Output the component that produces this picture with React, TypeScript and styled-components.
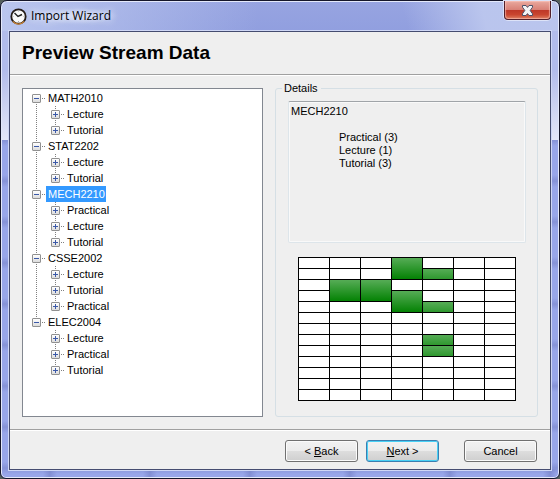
import React, { useState } from "react";
import styled, { createGlobalStyle, css } from "styled-components";

const GlobalStyle = createGlobalStyle`
  * { box-sizing: border-box; }
  html, body { margin: 0; padding: 0; background: #55605c; }
  body {
    font-family: "Liberation Sans", Arial, sans-serif;
    font-size: 11px;
    line-height: 16px;
    color: #000;
    cursor: default;
  }
`;

const Frame = styled.div`
  display: flex;
  flex-direction: column;
  min-height: 100vh;
  padding: 0 8px 8px;
  border: 1px solid #15162a;
  border-radius: 7px 7px 6px 6px;
  box-shadow: inset 0 0 0 1px #e4e9fb;
  background:
    linear-gradient(to right, rgba(190, 202, 240, 0.9), rgba(150, 164, 226, 0) 46%) 0 0 / 100% 30px no-repeat,
    linear-gradient(75deg, rgba(190, 200, 238, 0) 72%, rgba(188, 199, 238, 0.95) 86%) 0 0 / 100% 30px no-repeat,
    linear-gradient(#97a4e1, #919fdf) 0 0 / 100% 30px no-repeat,
    linear-gradient(rgba(178, 188, 235, 1) 50%, #e4e7f8) 0 0 / 100% 139px no-repeat,
    repeating-linear-gradient(to right, transparent 0 42px, rgba(100, 110, 180, 0.4) 49px, transparent 56px 100px) 0 100% / 100% 9px no-repeat,
    repeating-linear-gradient(to bottom, transparent 0 10px, rgba(100, 110, 180, 0.35) 16px, transparent 22px 41px) 0 0,
    #98a6e9;
`;

const TitleBar = styled.header`
  display: flex;
  align-items: flex-start;
  height: 30px;
  padding-left: 1px;
`;

const TitleText = styled.div`
  flex: 1;
  display: flex;
  align-items: center;
  gap: 4px;
  height: 28px;
  padding-top: 2px;
  font-family: "Open Sans", "Noto Sans", sans-serif;
  font-size: 12px;

  span {
    padding-right: 8px;
    background: radial-gradient(closest-side, rgba(235, 240, 253, 0.6), rgba(235, 240, 253, 0));
    text-shadow: 0 0 6px #e8edfc, 0 0 10px #e8edfc;
  }
`;

const CloseButton = styled.button`
  display: flex;
  align-items: center;
  justify-content: center;
  width: 47px;
  height: 19px;
  padding: 0;
  border: 1px solid #53202a;
  border-top: 0;
  border-radius: 0 0 4px 4px;
  box-shadow: 0 0 0 1px #dde3f8, inset 0 0 1px 1px rgba(255, 205, 195, 0.6);
  background: linear-gradient(#e9a99f, #d98177 48%, #bd3727 50%, #c9452f 75%, #dc7b5c);
`;

const Content = styled.main`
  flex: 1;
  display: flex;
  flex-direction: column;
  border: 1px solid #454c70;
  box-shadow: 0 0 0 1px #cfd7f6;
  background: #efefef;
`;

const Heading = styled.h1`
  margin: 0;
  padding: 9px 12px;
  border-bottom: 1px solid #a0a0a0;
  box-shadow: 0 1px 0 #fff;
  font-size: 19px;
  font-weight: bold;
  line-height: 24px;
`;

const Panels = styled.div`
  flex: 1;
  display: grid;
  grid-template-columns: 241fr 263fr;
  gap: 12px;
  padding: 13px 12px 12px;
`;

const TreePane = styled.div`
  padding: 1px 9px;
  border: 1px solid #828790;
  background: #fff;
`;

const dotsDown = "repeating-linear-gradient(to bottom, #808080 0 1px, transparent 1px 2px)";
const dotsAcross = "repeating-linear-gradient(to right, #808080 0 1px, transparent 1px 2px)";

const TreeList = styled.ul`
  margin: 0;
  padding: 0;
  list-style: none;
`;

const Branch = styled.li`
  background: ${dotsDown} 4px 0 / 1px 100% no-repeat;

  &:first-child { background-position: 4px 8px; }
  &:last-child { background-size: 1px 8px; }
`;

const ChildList = styled(TreeList)`
  padding-left: 19px;
`;

const Leaf = styled.li`
  background: ${dotsDown} 4px 0 / 1px 100% no-repeat;

  &:last-child { background-size: 1px 8px; }
`;

const NodeRow = styled.div`
  display: flex;
  align-items: center;
  height: 16px;
  background: ${dotsAcross} 10px 8px / 4px 1px no-repeat;
`;

const Expander = styled.button`
  width: 9px;
  height: 9px;
  margin-right: 5px;
  padding: 0;
  border: 1px solid #919191;
  border-radius: 1px;
  background: linear-gradient(#fff, #dcdcdc);

  svg { display: block; }
`;

const NodeLabel = styled.span<{ $selected?: boolean }>`
  padding: 0 1px 0 2px;
  ${(p) => p.$selected && css`
    background: #3399ff;
    color: #fff;
  `}
`;

const GroupBox = styled.fieldset`
  min-width: 0;
  margin: -8px 0 0;
  padding: 5px 11px 15px 12px;
  border: 1px solid #d5dfe5;
  border-radius: 3px;

  legend {
    margin-left: -6px;
    padding: 0 3px 0 2px;
    line-height: 16px;
  }
`;

const Summary = styled.div`
  min-height: 142px;
  padding: 3px 2px;
  border: 1px solid #dde5ea;
  border-top: 1px solid #a0a4a8;
  border-radius: 2px;
  box-shadow: inset 0 0 0 1px #f9f9f9;
  line-height: 13px;

  p { margin: 0 0 13px; }
  ul { margin: 0; padding: 0 0 0 48px; list-style: none; }
`;

const Timetable = styled.table`
  width: calc(100% - 20px);
  margin: 14px 10px 0;
  table-layout: fixed;
  border-collapse: collapse;
  background: #fff;
`;

const Slot = styled.td<{ $busy?: boolean }>`
  height: 11px;
  padding: 0;
  border: 1px solid #000;
  font-size: 0;
  line-height: 0;
  ${(p) => p.$busy && css`
    background: linear-gradient(#56ac56, #008000) 0 0 / 100% 22px no-repeat;
  `}
`;

const Footer = styled.footer`
  display: flex;
  justify-content: flex-end;
  gap: 8px;
  padding: 10px 13px 7px;
  border-top: 1px solid #a0a0a0;
  box-shadow: inset 0 1px 0 #fff;
`;

const PushButton = styled.button<{ $primary?: boolean; $apart?: boolean }>`
  width: 73px;
  height: 22px;
  margin-left: ${(p) => (p.$apart ? "17px" : "0")};
  padding: 0;
  border: 1px solid ${(p) => (p.$primary ? "#3c7fb1" : "#707070")};
  border-radius: 3px;
  box-shadow: inset 0 0 0 1px ${(p) => (p.$primary ? "#48d0f5" : "#fbfbfb")};
  background: linear-gradient(#f2f2f2, #ebebeb 50%, #dddddd 51%, #cfcfcf);
  color: #000;
  font: inherit;
  line-height: 18px;
`;

type Course = { code: string; streams: string[] };

const courses: Course[] = [
  { code: "MATH2010", streams: ["Lecture", "Tutorial"] },
  { code: "STAT2202", streams: ["Lecture", "Tutorial"] },
  { code: "MECH2210", streams: ["Practical", "Lecture", "Tutorial"] },
  { code: "CSSE2002", streams: ["Lecture", "Tutorial", "Practical"] },
  { code: "ELEC2004", streams: ["Lecture", "Practical", "Tutorial"] },
];

const DAYS = 7;
const PERIODS = 13;
const sessions = [
  { day: 3, start: 0, length: 2 },
  { day: 4, start: 1, length: 1 },
  { day: 1, start: 2, length: 2 },
  { day: 2, start: 2, length: 2 },
  { day: 3, start: 3, length: 2 },
  { day: 4, start: 4, length: 1 },
  { day: 4, start: 7, length: 1 },
  { day: 4, start: 8, length: 1 },
];

function ClockIcon() {
  return (
    <svg width="17" height="17" viewBox="0 0 17 17" aria-hidden="true">
      <circle cx="8.5" cy="8.5" r="7.2" fill="#fafafa" stroke="#241c18" strokeWidth="1.8" />
      <path d="M2.8 13.4A7.4 7.4 0 0 0 14.2 13.4" fill="none" stroke="#c98232" strokeWidth="1.2" />
      <path d="M4.5 5 8 8.5 12 6.5" fill="none" stroke="#222" strokeWidth="1.4" />
      <path d="M8.5 2.5v1M8.5 13v1M2.5 8.5h1M13.5 8.5h1" stroke="#aaa" />
    </svg>
  );
}

function CloseIcon() {
  return (
    <svg width="13" height="11" viewBox="0 0 13 11" aria-hidden="true">
      <path
        d="M1.5 .5H5L6.5 2.4 8 .5h3.5v1.7L9.2 5.5l2.3 3.3v1.7H8L6.5 8.6 5 10.5H1.5V8.8l2.3-3.3L1.5 2.2Z"
        fill="#f4f4f6"
        stroke="#4c5068"
      />
    </svg>
  );
}

function Toggle({ open, label, onClick }: { open: boolean; label: string; onClick?: () => void }) {
  return (
    <Expander type="button" aria-label={label} aria-expanded={open} onClick={onClick}>
      <svg width="7" height="7" viewBox="0 0 7 7" aria-hidden="true">
        <path d={open ? "M1 3.5H6" : "M1 3.5H6M3.5 1V6"} stroke="#3b59a8" />
      </svg>
    </Expander>
  );
}

function CourseTree() {
  const [closed, setClosed] = useState<string[]>([]);
  const [selected, setSelected] = useState("MECH2210");
  const toggle = (code: string) =>
    setClosed((c) => (c.includes(code) ? c.filter((x) => x !== code) : [...c, code]));
  return (
    <TreeList>
      {courses.map(({ code, streams }) => {
        const open = !closed.includes(code);
        return (
          <Branch key={code}>
            <NodeRow>
              <Toggle open={open} label={`Toggle ${code}`} onClick={() => toggle(code)} />
              <NodeLabel $selected={selected === code} onClick={() => setSelected(code)}>{code}</NodeLabel>
            </NodeRow>
            {open && (
              <ChildList>
                {streams.map((stream) => (
                  <Leaf key={stream}>
                    <NodeRow>
                      <Toggle open={false} label={`Expand ${stream}`} />
                      <NodeLabel>{stream}</NodeLabel>
                    </NodeRow>
                  </Leaf>
                ))}
              </ChildList>
            )}
          </Branch>
        );
      })}
    </TreeList>
  );
}

function StreamTimetable() {
  return (
    <Timetable aria-label="Timetable">
      <tbody>
        {Array.from({ length: PERIODS }, (_, period) => (
          <tr key={period}>
            {Array.from({ length: DAYS }, (_, day) => {
              const session = sessions.find(
                (s) => s.day === day && period >= s.start && period < s.start + s.length
              );
              if (session && session.start !== period) return null;
              return <Slot key={day} $busy={!!session} rowSpan={session ? session.length : 1} />;
            })}
          </tr>
        ))}
      </tbody>
    </Timetable>
  );
}

export default function App() {
  return (
    <>
      <GlobalStyle />
      <Frame>
        <TitleBar>
          <TitleText>
            <ClockIcon />
            <span>Import Wizard</span>
          </TitleText>
          <CloseButton type="button" aria-label="Close">
            <CloseIcon />
          </CloseButton>
        </TitleBar>
        <Content>
          <Heading>Preview Stream Data</Heading>
          <Panels>
            <TreePane>
              <CourseTree />
            </TreePane>
            <GroupBox>
              <legend>Details</legend>
              <Summary>
                <p>MECH2210</p>
                <ul>
                  <li>Practical (3)</li>
                  <li>Lecture (1)</li>
                  <li>Tutorial (3)</li>
                </ul>
              </Summary>
              <StreamTimetable />
            </GroupBox>
          </Panels>
          <Footer>
            <PushButton type="button">&lt; <u>B</u>ack</PushButton>
            <PushButton type="button" $primary><u>N</u>ext &gt;</PushButton>
            <PushButton type="button" $apart>Cancel</PushButton>
          </Footer>
        </Content>
      </Frame>
    </>
  );
}
